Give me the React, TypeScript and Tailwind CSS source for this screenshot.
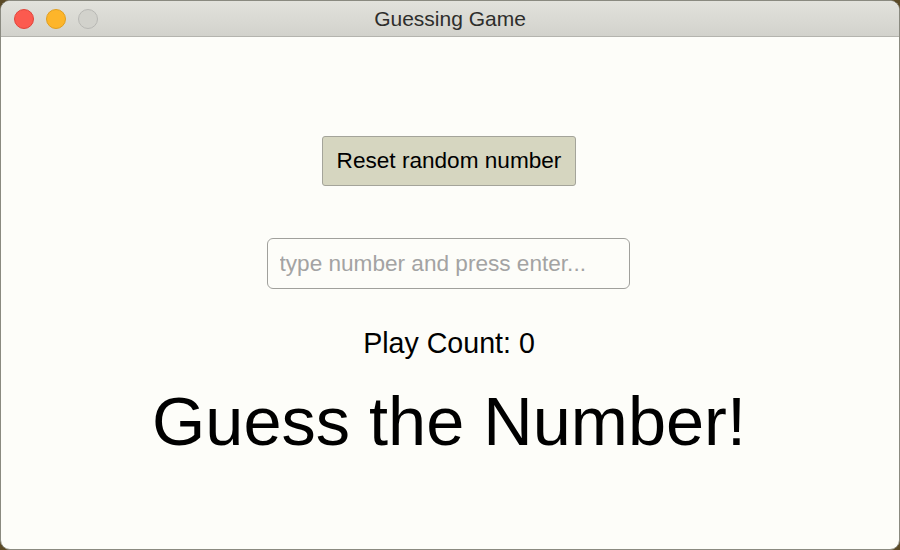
import React from "react";

export default function App() {
  return (
    <div className="w-[900px] h-[550px] bg-[#5b4a26] overflow-hidden" style={{ fontFamily: '"Liberation Sans", Arial, sans-serif' }}>
      <div className="w-full h-full rounded-[10px] overflow-hidden flex flex-col bg-[#fdfdf9] border border-[#8a8a80]">
        <div className="relative h-[36px] shrink-0 bg-gradient-to-b from-[#e2e2dc] to-[#d2d2cc] border-b border-[#b4b4ae] flex items-center">
          <div className="flex items-center gap-[12px] pl-[13px] pt-[1px]">
            <div className="w-[20px] h-[20px] rounded-full bg-[#fc5a4f] border border-[#e0443a]" />
            <div className="w-[20px] h-[20px] rounded-full bg-[#fdb52a] border border-[#e09e1f]" />
            <div className="w-[20px] h-[20px] rounded-full bg-[#d2d2cc] border border-[#b8b8b4]" />
          </div>
          <div className="absolute inset-0 flex items-center justify-center text-[21px] text-[#2e2e2c] pointer-events-none">
            Guessing Game
          </div>
        </div>
        <div className="flex flex-col items-center pt-[99px] pr-[2px]">
          <button className="w-[254px] h-[50px] bg-[#d6d6c0] border border-[#a4a49a] rounded-[3px] text-[22.6px] text-black leading-none">
            Reset random number
          </button>
          <input
            className="mt-[52px] w-[363px] h-[51px] -translate-x-[1px] rounded-[6px] border border-[#a0a09c] bg-transparent px-[12px] text-[22.6px] text-black placeholder:text-[#a3a3a3] outline-none"
            placeholder="type number and press enter..."
          />
          <div className="mt-[40px] text-[28.6px] leading-[28px] text-black">Play Count: 0</div>
          <div className="mt-[31px] text-[68.5px] leading-[68px] text-black">Guess the Number!</div>
        </div>
      </div>
    </div>
  );
}
